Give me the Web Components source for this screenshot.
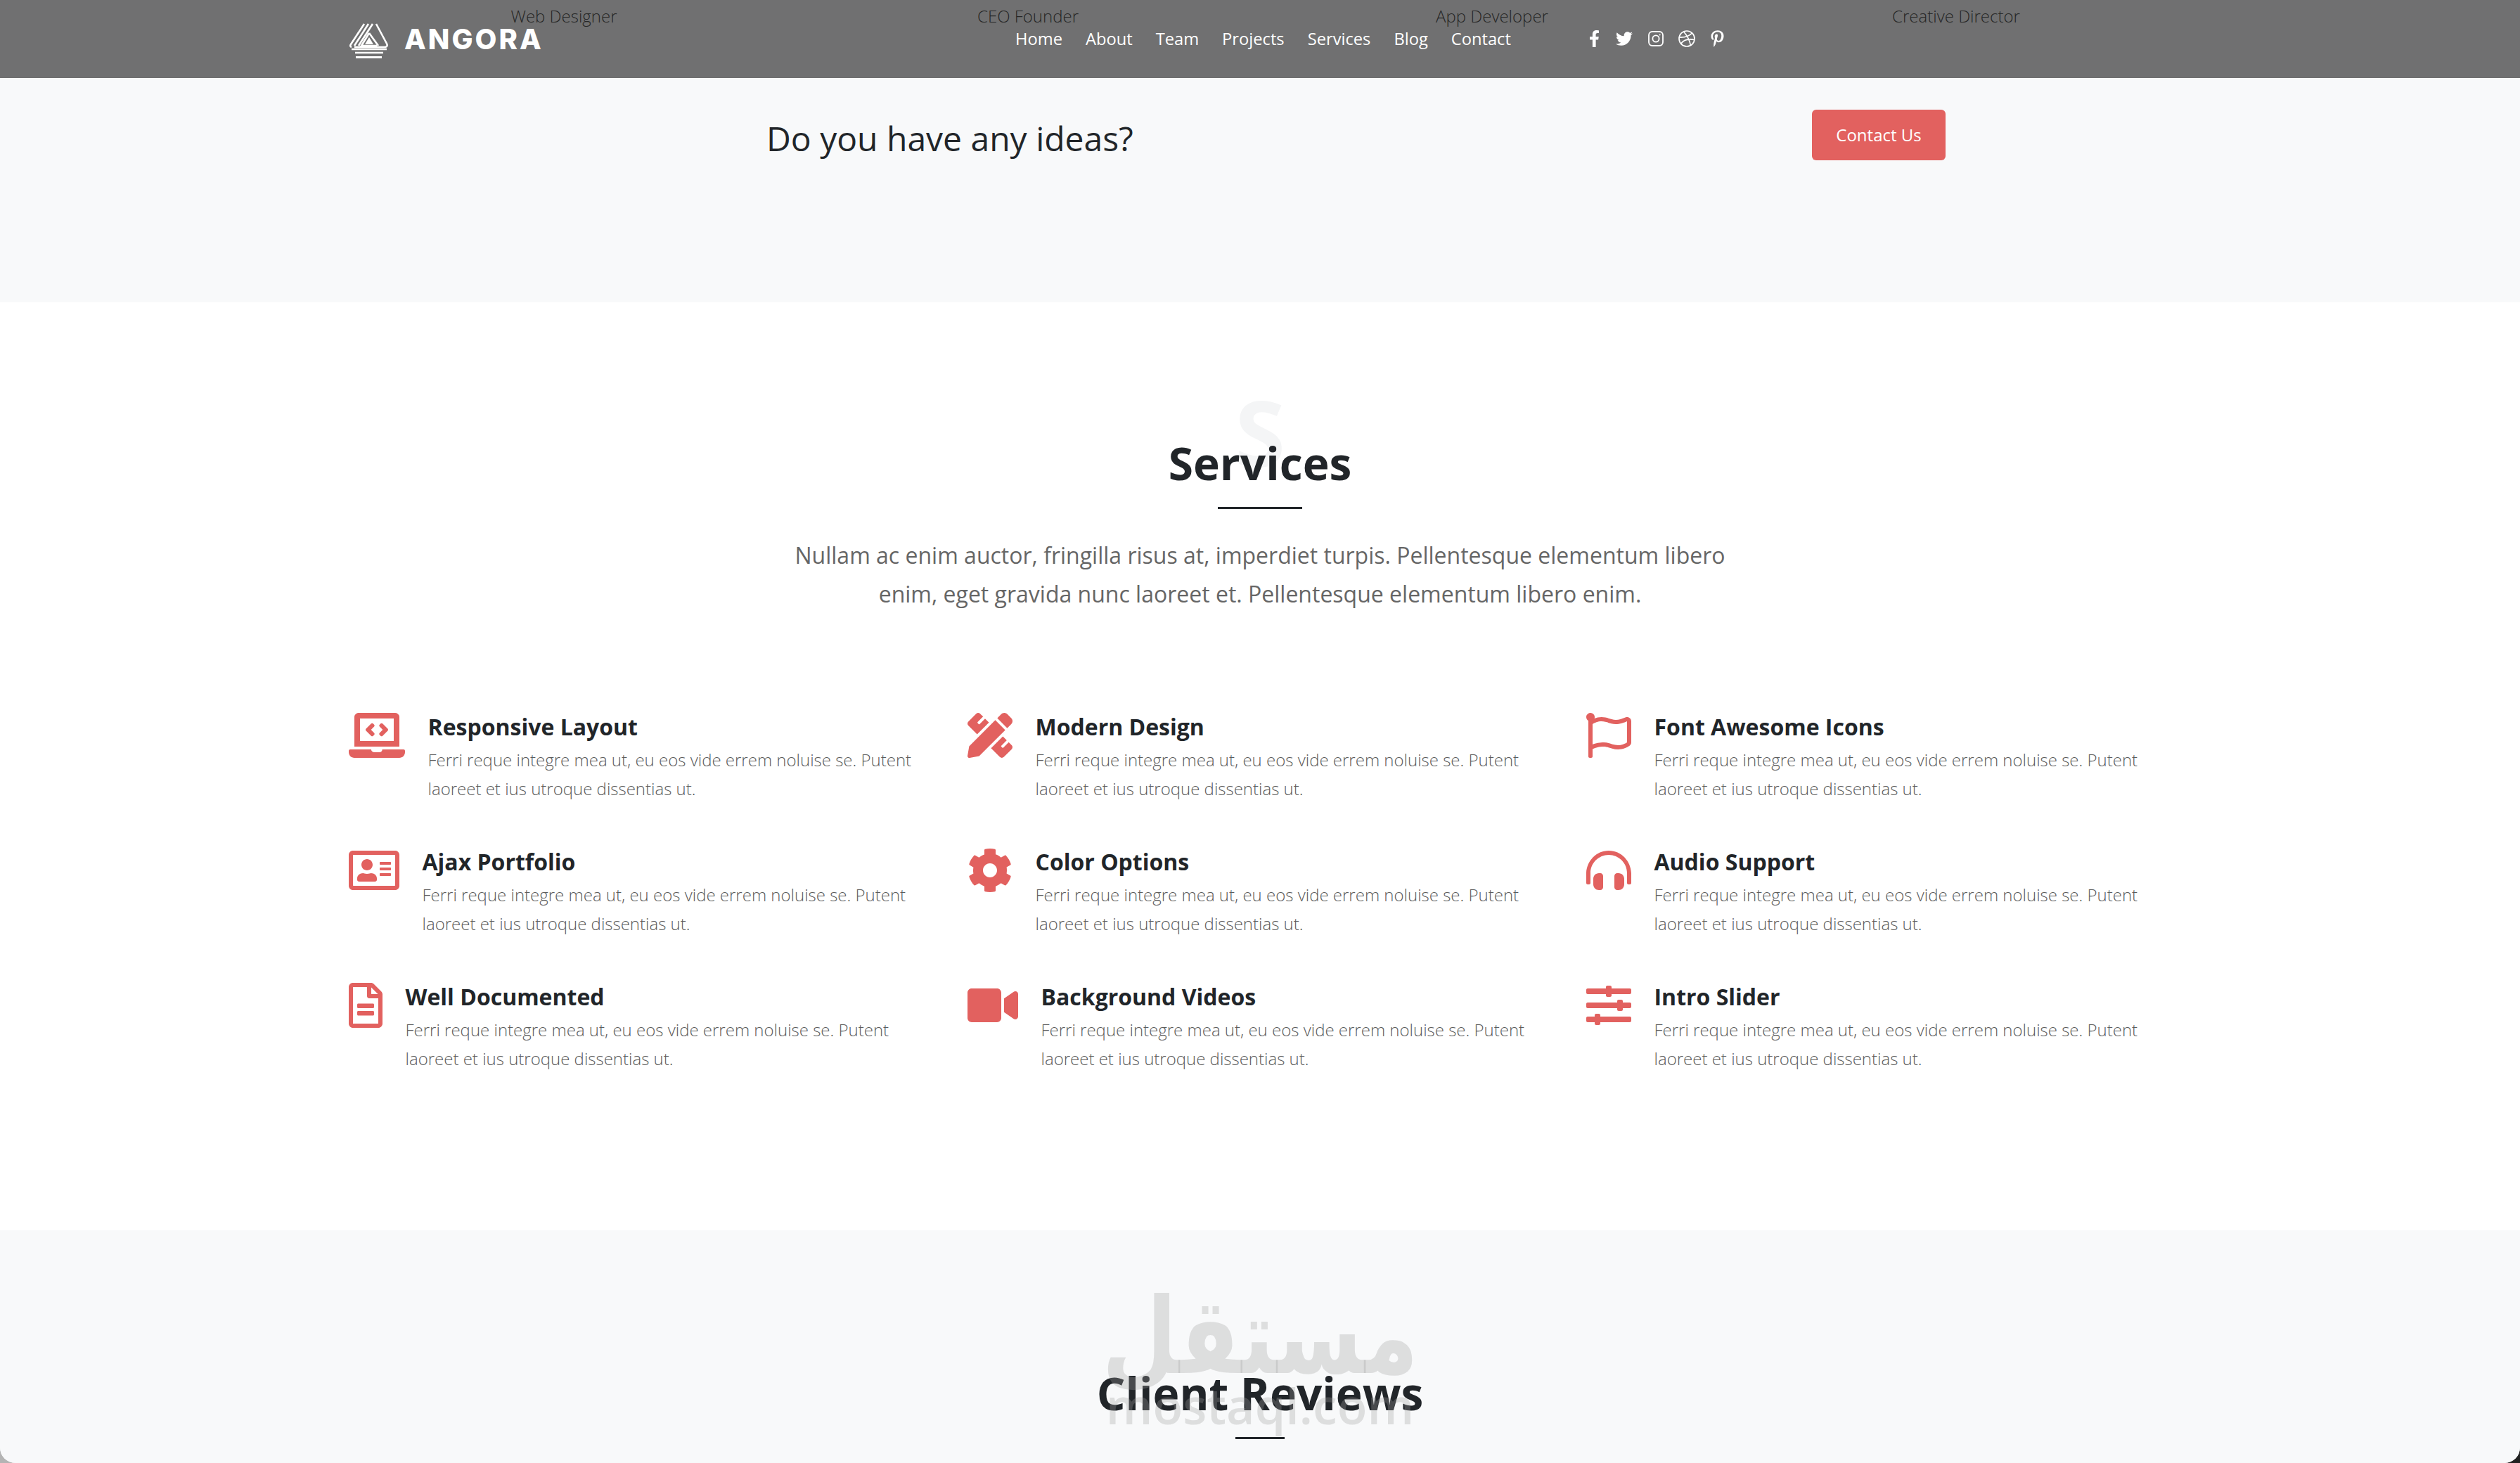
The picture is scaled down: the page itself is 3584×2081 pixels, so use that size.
<!DOCTYPE html>
<html lang="en">

<head>
    <meta charset="UTF-8" />
    <title>Angora</title>
    <style>
        /* what shows behind the rounded window corners */
        html, body { margin: 0; background: linear-gradient(90deg, #b4b4b4 50%, #222 50%); }
        body { font-family: "Open Sans", "Liberation Sans", sans-serif; }
    </style>
</head>

<body>
    <angora-page>
        <team-strip slot="top"></team-strip>
        <site-header slot="top"></site-header>
        <idea-banner></idea-banner>
        <services-section></services-section>
        <reviews-section></reviews-section>
    </angora-page>

    <script>
        const ICONS = {
            laptop: [640, 'M255.03 261.65c6.25 6.25 16.38 6.25 22.63 0l11.31-11.31c6.25-6.25 6.25-16.38 0-22.63L253.25 192l35.71-35.72c6.25-6.25 6.25-16.38 0-22.63l-11.31-11.31c-6.25-6.25-16.38-6.25-22.63 0l-58.34 58.34c-6.25 6.25-6.25 16.38 0 22.63l58.35 58.34zm96.01-11.3l11.31 11.31c6.25 6.25 16.38 6.25 22.63 0l58.34-58.34c6.25-6.25 6.25-16.38 0-22.63l-58.34-58.34c-6.25-6.25-16.38-6.25-22.63 0l-11.31 11.31c-6.25 6.25-6.25 16.38 0 22.63L386.75 192l-35.71 35.72c-6.25 6.25-6.25 16.38 0 22.63zM624 416H381.54c-.74 19.81-14.71 32-32.74 32H288c-18.69 0-33.02-17.47-32.77-32H16c-8.8 0-16 7.2-16 16v16c0 35.2 28.8 64 64 64h512c35.2 0 64-28.8 64-64v-16c0-8.8-7.2-16-16-16zM576 48c0-26.4-21.6-48-48-48H112C85.6 0 64 21.6 64 48v336h512V48zm-64 272H128V64h384v256z'],
            pencil: [512, 'M109.46 244.04l134.58-134.56-44.12-44.12-61.68 61.68a7.919 7.919 0 0 1-11.21 0l-11.21-11.21c-3.1-3.1-3.1-8.12 0-11.21l61.68-61.68-33.64-33.65C131.47-3.1 111.39-3.1 99 9.29L9.29 99c-12.38 12.39-12.39 32.47 0 44.86l100.17 100.18zm388.47-116.8c18.76-18.76 18.75-49.17 0-67.93l-45.25-45.25c-18.76-18.76-49.18-18.76-67.95 0l-46.02 46.01 113.2 113.2 46.02-46.03zM316.08 82.71l-297 296.96L.32 487.11c-2.53 14.49 10.09 27.11 24.59 24.56l107.45-18.84L429.28 195.9 316.08 82.71zm186.63 285.43l-33.64-33.64-61.68 61.68c-3.1 3.1-8.12 3.1-11.21 0l-11.21-11.21c-3.09-3.1-3.09-8.12 0-11.21l61.68-61.68-44.14-44.14L267.93 402.5l100.21 100.2c12.39 12.39 32.47 12.39 44.86 0l89.71-89.7c12.38-12.39 12.38-32.47 0-44.86z'],
            flag: [512, 'M336.174 80c-49.132 0-93.305-32-161.913-32-31.301 0-58.303 6.482-80.721 15.168a48.04 48.04 0 0 0 2.142-20.727C93.067 19.575 74.167 1.594 51.201.104 23.242-1.71 0 20.431 0 48c0 17.764 9.657 33.262 24 41.562V496c0 8.837 7.163 16 16 16h16c8.837 0 16-7.163 16-16v-83.443C109.869 395.28 143.259 384 199.826 384c49.132 0 93.305 32 161.913 32 58.479 0 101.972-22.617 128.548-39.981C503.846 367.161 512 352.051 512 335.855V95.937c0-34.459-35.264-57.768-66.904-44.117C409.193 67.309 371.641 80 336.174 80zM464 336c-21.783 15.412-60.824 32-102.261 32-59.945 0-102.002-32-161.913-32-43.361 0-96.379 9.403-127.826 24V128c21.784-15.412 60.824-32 102.261-32 59.945 0 102.002 32 161.913 32 43.271 0 96.32-17.366 127.826-32v240z'],
            card: [576, 'M528 32H48C21.5 32 0 53.5 0 80v352c0 26.5 21.5 48 48 48h480c26.5 0 48-21.5 48-48V80c0-26.5-21.5-48-48-48zm-6 400H54c-3.3 0-6-2.7-6-6V86c0-3.3 2.7-6 6-6h468c3.3 0 6 2.7 6 6v340c0 3.3-2.7 6-6 6zM208 256c35.3 0 64-28.7 64-64s-28.7-64-64-64-64 28.7-64 64 28.7 64 64 64zm-89.6 128h179.2c12.4 0 22.4-8.6 22.4-19.2v-19.2c0-31.8-30.1-57.6-67.2-57.6-10.8 0-18.7 8-44.8 8-26.9 0-33.4-8-44.8-8-37.1 0-67.2 25.8-67.2 57.6v19.2c0 10.6 10 19.2 22.4 19.2zM360 320h112c4.4 0 8-3.6 8-8v-16c0-4.4-3.6-8-8-8H360c-4.4 0-8 3.6-8 8v16c0 4.4 3.6 8 8 8zm0-64h112c4.4 0 8-3.6 8-8v-16c0-4.4-3.6-8-8-8H360c-4.4 0-8 3.6-8 8v16c0 4.4 3.6 8 8 8zm0-64h112c4.4 0 8-3.6 8-8v-16c0-4.4-3.6-8-8-8H360c-4.4 0-8 3.6-8 8v16c0 4.4 3.6 8 8 8z'],
            cog: [512, 'M487.4 315.7l-42.6-24.6c4.3-23.2 4.3-47 0-70.2l42.6-24.6c4.9-2.8 7.1-8.6 5.5-14-11.1-35.6-30-67.8-54.7-94.6-3.8-4.1-10-5.1-14.8-2.3L380.8 110c-17.9-15.4-38.5-27.3-60.8-35.1V25.8c0-5.6-3.9-10.5-9.4-11.7-36.7-8.2-74.3-7.8-109.2 0-5.5 1.2-9.4 6.1-9.4 11.7V75c-22.2 7.9-42.8 19.8-60.8 35.1L88.7 85.5c-4.9-2.8-11-1.9-14.8 2.3-24.7 26.7-43.6 58.9-54.7 94.6-1.7 5.4.6 11.2 5.5 14L67.3 221c-4.3 23.2-4.3 47 0 70.2l-42.6 24.6c-4.9 2.8-7.1 8.6-5.5 14 11.1 35.6 30 67.8 54.7 94.6 3.8 4.1 10 5.1 14.8 2.3l42.6-24.6c17.9 15.4 38.5 27.3 60.8 35.1v49.2c0 5.6 3.9 10.5 9.4 11.7 36.7 8.2 74.3 7.8 109.2 0 5.5-1.2 9.4-6.1 9.4-11.7v-49.2c22.2-7.9 42.8-19.8 60.8-35.1l42.6 24.6c4.9 2.8 11 1.9 14.8-2.3 24.7-26.7 43.6-58.9 54.7-94.6 1.5-5.5-.7-11.3-5.6-14.1zM256 336c-44.1 0-80-35.9-80-80s35.9-80 80-80 80 35.9 80 80-35.9 80-80 80z'],
            headphones: [512, 'M160 288h-16c-35.35 0-64 28.7-64 64.12v63.76c0 35.41 28.65 64.12 64 64.12h16c17.67 0 32-14.36 32-32.06V320.06c0-17.71-14.33-32.06-32-32.06zm208 0h-16c-17.67 0-32 14.35-32 32.06v127.88c0 17.7 14.33 32.06 32 32.06h16c35.35 0 64-28.71 64-64.12v-63.76c0-35.41-28.65-64.12-64-64.12zM256 32C112.91 32 4.57 151.13 0 288v112c0 8.84 7.16 16 16 16h16c8.84 0 16-7.16 16-16V288c0-114.67 93.33-207.8 208-207.82 114.67.02 208 93.15 208 207.82v112c0 8.84 7.16 16 16 16h16c8.84 0 16-7.16 16-16V288C507.43 151.13 399.09 32 256 32z'],
            file: [384, 'M288 248v28c0 6.6-5.4 12-12 12H108c-6.6 0-12-5.4-12-12v-28c0-6.6 5.4-12 12-12h168c6.6 0 12 5.4 12 12zm-12 72H108c-6.6 0-12 5.4-12 12v28c0 6.6 5.4 12 12 12h168c6.6 0 12-5.4 12-12v-28c0-6.6-5.4-12-12-12zm108-188.1V464c0 26.5-21.5 48-48 48H48c-26.5 0-48-21.5-48-48V48C0 21.5 21.5 0 48 0h204.1C264.8 0 277 5.1 286 14.1L369.9 98c9 8.9 14.1 21.2 14.1 33.9zm-128-80V128h76.1L256 51.9zM336 464V176H232c-13.3 0-24-10.7-24-24V48H48v416h288z'],
            video: [576, 'M336.2 64H47.8C21.4 64 0 85.4 0 111.8v288.4C0 426.6 21.4 448 47.8 448h288.4c26.4 0 47.8-21.4 47.8-47.8V111.8c0-26.4-21.4-47.8-47.8-47.8zm189.4 37.7L416 177.3v157.4l109.6 75.5c21.2 14.6 50.4-.3 50.4-25.8V127.5c0-25.4-29.1-40.4-50.4-25.8z'],
            sliders: [512, 'M496 384H160v-16c0-8.8-7.2-16-16-16h-32c-8.8 0-16 7.2-16 16v16H16c-8.8 0-16 7.2-16 16v32c0 8.8 7.2 16 16 16h80v16c0 8.8 7.2 16 16 16h32c8.8 0 16-7.2 16-16v-16h336c8.8 0 16-7.2 16-16v-32c0-8.8-7.2-16-16-16zm0-160h-80v-16c0-8.8-7.2-16-16-16h-32c-8.8 0-16 7.2-16 16v16H16c-8.8 0-16 7.2-16 16v32c0 8.8 7.2 16 16 16h336v16c0 8.8 7.2 16 16 16h32c8.8 0 16-7.2 16-16v-16h80c8.8 0 16-7.2 16-16v-32c0-8.8-7.2-16-16-16zm0-160H288V48c0-8.8-7.2-16-16-16h-32c-8.8 0-16 7.2-16 16v16H16C7.2 64 0 71.2 0 80v32c0 8.8 7.2 16 16 16h208v16c0 8.8 7.2 16 16 16h32c8.8 0 16-7.2 16-16v-16h208c8.8 0 16-7.2 16-16V80c0-8.8-7.2-16-16-16z']
        };

        // base class, each element just gives its markup
        class ShadowBlock extends HTMLElement {
            constructor() {
                super();
                this.attachShadow({ mode: 'open' });
                this.shadowRoot.innerHTML = this.markup();
            }
        }

        class AngoraPage extends ShadowBlock {
            markup() {
                return `<style>
                    :host { display: block; height: 2081px; overflow: hidden; border-radius: 0 0 22px 22px; background: #f8f9fa; }
                    .top { position: relative; height: 111px; }
                </style>
                <div class="top"><slot name="top"></slot></div>
                <slot></slot>`;
            }
        }

        class TeamStrip extends ShadowBlock {
            markup() {
                return `<style>
                    :host { display: grid; grid-template-columns: repeat(4, 660px); padding-left: 472px; height: 111px;
                        color: #555; font-size: 24px; font-weight: 300; line-height: 46px; text-align: center; }
                </style>
                <div>Web Designer</div><div>CEO Founder</div><div>App Developer</div><div>Creative Director</div>`;
            }
        }

        class SiteHeader extends ShadowBlock {
            markup() {
                const links = ['Home', 'About', 'Team', 'Projects', 'Services', 'Blog', 'Contact'];
                return `<style>
                    :host { position: absolute; inset: 0; display: flex; align-items: flex-start; padding: 0 0 0 496px;
                        background: rgba(0, 0, 0, .55); color: #fff; }
                    .logo { display: flex; align-items: center; gap: 21px; margin-top: 33px; height: 50px; width: 948px; }
                    .logo b { font: 800 40px/40px Inter, sans-serif; letter-spacing: 3px; margin-top: -5px; }
                    nav { display: flex; gap: 33px; font-size: 23.7px; line-height: 34px; margin-top: 38px; width: 816px; }
                    .social { display: flex; align-items: center; height: 24px; margin-top: 43px; position: relative; }
                    svg { display: block; fill: #fff; }
                </style>
                <div class="logo">
                    <svg width="58" height="50" viewBox="0 0 58 50" fill="none" style="fill:none" stroke="#fff" stroke-width="2.6">
                        <path d="M22 1 3 30q-2 3 1 4M28 1 8 32M34 1 14 32M39 1 54 29q2 4-2 5H8" />
                        <path d="M29 14 42 32M29 14 18 32h22" />
                        <path d="M29 20 23 30h12z" fill="#fff" stroke="none" />
                        <path d="M4 37h50M9 42h40" />
                        <path d="M10 48.5h37" stroke-width="3" />
                    </svg>
                    <b>ANGORA</b>
                </div>
                <nav>${links.map(l => `<span>${l}</span>`).join('')}</nav>
                <div class="social">
                    <svg width="15" height="24" viewBox="0 0 320 512"><path d="M279.14 288l14.22-92.66h-88.91v-60.13c0-25.35 12.42-50.06 52.24-50.06h40.42V6.26S260.43 0 225.36 0c-73.22 0-121.08 44.38-121.08 124.72v70.62H22.89V288h81.39v224h100.17V288z" /></svg>
                    <svg style="margin-left:23px" width="24" height="24" viewBox="0 0 512 512"><path d="M459.37 151.716c.325 4.548.325 9.097.325 13.645 0 138.72-105.583 298.558-298.558 298.558-59.452 0-114.68-17.219-161.137-47.106 8.447.974 16.568 1.299 25.34 1.299 49.055 0 94.213-16.568 130.274-44.832-46.132-.975-84.792-31.188-98.112-72.772 6.498.974 12.995 1.624 19.818 1.624 9.421 0 18.843-1.3 27.614-3.573-48.081-9.747-84.143-51.98-84.143-102.985v-1.299c13.969 7.797 30.214 12.67 47.431 13.319-28.264-18.843-46.781-51.005-46.781-87.391 0-19.492 5.197-37.36 14.294-52.954 51.655 63.675 129.3 105.258 216.365 109.807-1.624-7.797-2.599-15.918-2.599-24.04 0-57.828 46.782-104.934 104.934-104.934 30.213 0 57.502 12.67 76.67 33.137 23.715-4.548 46.456-13.32 66.599-25.34-7.798 24.366-24.366 44.833-46.132 57.827 21.117-2.273 41.584-8.122 60.426-16.243-14.292 20.791-32.161 39.308-52.628 54.253z" /></svg>
                    <svg style="margin-left:22px;fill:none" width="22" height="22" viewBox="0 0 22 22" stroke="#fff" stroke-width="1.8"><rect x="1" y="1" width="20" height="20" rx="5" /><circle cx="11" cy="11" r="4.6" /><circle cx="16.6" cy="5.4" r="1" fill="#fff" stroke="none" /></svg>
                    <svg style="margin-left:21px;fill:none" width="24" height="24" viewBox="0 0 24 24" stroke="#fff" stroke-width="1.7"><circle cx="12" cy="12" r="11" /><path d="M7.5 2C12 7 16 13 17.5 22M1.2 10C9 10.500 15 9 19.500 4M3.500 19.500C7 14 13 11.500 22.800 13.500" /></svg>
                    <svg style="margin-left:22px" width="19" height="24" viewBox="0 0 384 512"><path d="M204 6.5C101.4 6.5 0 74.9 0 185.6 0 256 39.6 296 63.6 296c9.9 0 15.6-27.6 15.6-35.4 0-9.3-23.7-29.1-23.7-67.8 0-80.4 61.2-137.4 140.4-137.4 68.1 0 118.500 38.7 118.500 109.800 0 53.100-21.300 152.700-90.300 152.700-24.900 0-46.200-18-46.200-43.800 0-37.800 26.400-74.400 26.400-113.400 0-66.200-93.900-54.200-93.900 25.800 0 16.800 2.100 35.400 9.600 50.700-13.800 59.400-42 147.900-42 209.100 0 18.900 2.700 37.500 4.500 56.400 3.400 3.800 1.700 3.400 6.900 1.500 50.400-69 48.600-82.500 71.400-172.800 12.300 23.400 44.100 36 69.300 36 106.200 0 153.900-103.500 153.900-196.800C384 71.300 298.200 6.500 204 6.500z" /></svg>
                </div>`;
            }
        }

        class IdeaBanner extends ShadowBlock {
            markup() {
                return `<style>
                    :host { display: flex; align-items: flex-start; height: 319px; padding-left: 1090px; background: #f8f9fa; }
                    h3 { margin: 51px 0 0; width: 1487px; font-size: 48px; font-weight: 400; line-height: 70px; color: #212529; }
                    a { margin-top: 45px; width: 190px; height: 72px; line-height: 72px; text-align: center; border-radius: 6px;
                        background: #e2615f; color: #fff; font-size: 24px; }
                </style>
                <h3>Do you have any ideas?</h3><a>Contact Us</a>`;
            }
        }

        class SectionTitle extends ShadowBlock {
            markup() {
                const rule = this.getAttribute('rule') || 120;
                return `<style>
                    :host { display: block; position: relative; text-align: center; color: #212529; }
                    .ghost { position: absolute; left: 0; right: 0; top: -81px; font-size: 130px; font-weight: 700; line-height: 160px; color: #f4f5f6; }
                    h2 { position: relative; margin: 0; font-size: 64px; font-weight: 700; line-height: 88px; }
                    i { display: block; width: ${rule}px; height: 3px; margin: 18px auto 0; background: #212529; }
                </style>
                <div class="ghost">${this.getAttribute('ghost') || ''}</div>
                <h2><slot></slot></h2>
                <i></i>`;
            }
        }

        class ServiceItem extends ShadowBlock {
            markup() {
                const [w, d] = ICONS[this.getAttribute('icon')];
                return `<style>
                    :host { display: flex; align-items: flex-start; gap: 32.5px; padding-left: 24px; }
                    svg { flex: none; display: block; fill: #e2615f; margin-top: 2px; }
                    h4 { margin: 0 0 4px; font-size: 32px; font-weight: 700; line-height: 44px; color: #212529; }
                    p { margin: 0; font-size: 24px; font-weight: 300; line-height: 41px; color: #5c5c5c; }
                </style>
                <svg width="${w / 8}" height="64" viewBox="0 0 ${w} 512"><path d="${d}" /></svg>
                <div><h4>${this.getAttribute('title')}</h4><p><slot></slot></p></div>`;
            }
        }

        class ServicesSection extends ShadowBlock {
            markup() {
                const text = 'Ferri reque integre mea ut, eu eos vide errem noluise se. Putent laoreet et ius utroque dissentias ut.';
                const items = [
                    ['laptop', 'Responsive Layout'], ['pencil', 'Modern Design'], ['flag', 'Font Awesome Icons'],
                    ['card', 'Ajax Portfolio'], ['cog', 'Color Options'], ['headphones', 'Audio Support'],
                    ['file', 'Well Documented'], ['video', 'Background Videos'], ['sliders', 'Intro Slider']
                ];
                return `<style>
                    :host { display: block; height: 1320px; background: #fff; padding-top: 185px; box-sizing: border-box; }
                    .lead { width: 1380px; margin: 38px auto 0; text-align: center; font-size: 32px; line-height: 55px; color: #666; }
                    .grid { display: grid; grid-template-columns: repeat(3, 856px); column-gap: 24px; row-gap: 0; grid-auto-rows: 192px; margin: 140px 0 0 472px; }
                </style>
                <section-title ghost="S">Services</section-title>
                <div class="lead">Nullam ac enim auctor, fringilla risus at, imperdiet turpis. Pellentesque elementum libero enim, eget gravida nunc laoreet et. Pellentesque elementum libero enim.</div>
                <div class="grid">${items.map(i => `<service-item icon="${i[0]}" title="${i[1]}">${text}</service-item>`).join('')}</div>`;
            }
        }

        // watermark of the screenshot's source, lies over the heading
        class MostaqlMark extends ShadowBlock {
            markup() {
                return `<style>
                    :host { position: absolute; left: 1577px; top: 82px; width: 430px; color: rgba(160, 160, 160, .3); }
                    .ar { display: flex; justify-content: center; height: 132px; font: 700 150px/132px "DejaVu Sans", sans-serif; white-space: nowrap; }
                    .ar span { display: block; flex: none; transform: translateY(3px) scaleX(.82); }
                    .en { display: flex; justify-content: center; font: 600 70px/70px "Open Sans", sans-serif; white-space: nowrap; }
                </style>
                <div class="ar" lang="ar" dir="rtl"><span>مستقل</span></div>
                <div class="en">mostaql.com</div>`;
            }
        }

        class ReviewsSection extends ShadowBlock {
            markup() {
                return `<style>
                    :host { display: block; position: relative; height: 331px; padding-top: 188px; box-sizing: border-box; background: #f8f9fa; }
                </style>
                <section-title rule="70">Client Reviews</section-title>
                <mostaql-mark></mostaql-mark>`;
            }
        }

        // children first, so upgrades find them ready
        customElements.define('section-title', SectionTitle);
        customElements.define('service-item', ServiceItem);
        customElements.define('mostaql-mark', MostaqlMark);
        customElements.define('team-strip', TeamStrip);
        customElements.define('site-header', SiteHeader);
        customElements.define('idea-banner', IdeaBanner);
        customElements.define('services-section', ServicesSection);
        customElements.define('reviews-section', ReviewsSection);
        customElements.define('angora-page', AngoraPage);
    </script>
</body>

</html>
